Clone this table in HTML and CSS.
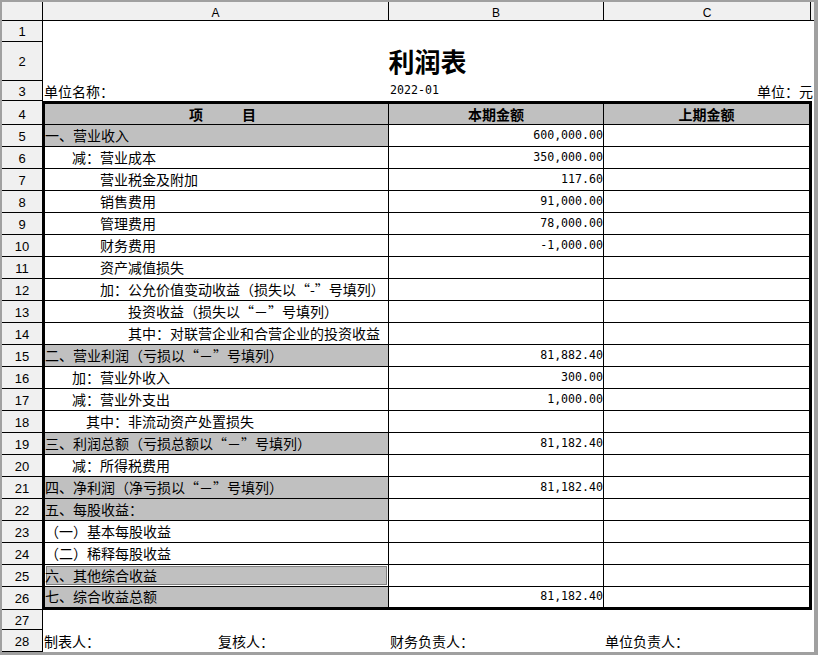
FILE: index.html
```html
<!DOCTYPE html>
<html lang="zh-CN">
<head>
<meta charset="utf-8">
<title>利润表</title>
<link rel="stylesheet" href="styles.css">
</head>
<body>
<div class="sheet">
  <div class="row colhead">
    <div class="rh"></div>
    <div class="ch ch-a">A</div>
    <div class="ch ch-b">B</div>
    <div class="ch ch-c">C</div>
    <div class="ch-tail"></div>
  </div>
  <div class="row r1"><div class="rh">1</div><div class="free"></div></div>
  <div class="row r2"><div class="rh">2</div><div class="free title">利润表</div></div>
  <div class="row r3">
    <div class="rh">3</div>
    <div class="free info">
      <span class="info-a">单位名称：</span>
      <span class="info-b num">2022-01</span>
      <span class="info-c">单位：元</span>
    </div>
  </div>
  <div class="block">
    <div class="rhcol">
      <div class="rh rh4">4</div>
      <div class="rh">5</div><div class="rh">6</div><div class="rh">7</div><div class="rh">8</div>
      <div class="rh">9</div><div class="rh">10</div><div class="rh">11</div><div class="rh">12</div>
      <div class="rh">13</div><div class="rh">14</div><div class="rh">15</div><div class="rh">16</div>
      <div class="rh">17</div><div class="rh">18</div><div class="rh">19</div><div class="rh">20</div>
      <div class="rh">21</div><div class="rh">22</div><div class="rh">23</div><div class="rh">24</div>
      <div class="rh">25</div>
      <div class="rh rh26">26</div>
    </div>
    <div class="table">
      <div class="trow head">
        <div class="cell hcell"><span>项</span><span class="gap"></span><span>目</span></div>
        <div class="cell hcell">本期金额</div>
        <div class="cell hcell">上期金额</div>
      </div>
      <div class="trow">
        <div class="cell item gray">一、营业收入</div>
        <div class="cell num amt">600,000.00</div>
        <div class="cell"></div>
      </div>
      <div class="trow">
        <div class="cell item l1">减：营业成本</div>
        <div class="cell num amt">350,000.00</div>
        <div class="cell"></div>
      </div>
      <div class="trow">
        <div class="cell item l2">营业税金及附加</div>
        <div class="cell num amt">117.60</div>
        <div class="cell"></div>
      </div>
      <div class="trow">
        <div class="cell item l2">销售费用</div>
        <div class="cell num amt">91,000.00</div>
        <div class="cell"></div>
      </div>
      <div class="trow">
        <div class="cell item l2">管理费用</div>
        <div class="cell num amt">78,000.00</div>
        <div class="cell"></div>
      </div>
      <div class="trow">
        <div class="cell item l2">财务费用</div>
        <div class="cell num amt">-1,000.00</div>
        <div class="cell"></div>
      </div>
      <div class="trow">
        <div class="cell item l2">资产减值损失</div>
        <div class="cell num amt"></div>
        <div class="cell"></div>
      </div>
      <div class="trow">
        <div class="cell item l2">加：公允价值变动收益（损失以“-”号填列）</div>
        <div class="cell num amt"></div>
        <div class="cell"></div>
      </div>
      <div class="trow">
        <div class="cell item l3">投资收益（损失以“－”号填列）</div>
        <div class="cell num amt"></div>
        <div class="cell"></div>
      </div>
      <div class="trow">
        <div class="cell item l3">其中：对联营企业和合营企业的投资收益</div>
        <div class="cell num amt"></div>
        <div class="cell"></div>
      </div>
      <div class="trow">
        <div class="cell item gray">二、营业利润（亏损以“－”号填列）</div>
        <div class="cell num amt">81,882.40</div>
        <div class="cell"></div>
      </div>
      <div class="trow">
        <div class="cell item l1">加：营业外收入</div>
        <div class="cell num amt">300.00</div>
        <div class="cell"></div>
      </div>
      <div class="trow">
        <div class="cell item l1">减：营业外支出</div>
        <div class="cell num amt">1,000.00</div>
        <div class="cell"></div>
      </div>
      <div class="trow">
        <div class="cell item l15">其中：非流动资产处置损失</div>
        <div class="cell num amt"></div>
        <div class="cell"></div>
      </div>
      <div class="trow">
        <div class="cell item gray">三、利润总额（亏损总额以“－”号填列）</div>
        <div class="cell num amt">81,182.40</div>
        <div class="cell"></div>
      </div>
      <div class="trow">
        <div class="cell item l1">减：所得税费用</div>
        <div class="cell num amt"></div>
        <div class="cell"></div>
      </div>
      <div class="trow">
        <div class="cell item gray">四、净利润（净亏损以“－”号填列）</div>
        <div class="cell num amt">81,182.40</div>
        <div class="cell"></div>
      </div>
      <div class="trow">
        <div class="cell item gray">五、每股收益：</div>
        <div class="cell num amt"></div>
        <div class="cell"></div>
      </div>
      <div class="trow">
        <div class="cell item">（一）基本每股收益</div>
        <div class="cell num amt"></div>
        <div class="cell"></div>
      </div>
      <div class="trow">
        <div class="cell item">（二）稀释每股收益</div>
        <div class="cell num amt"></div>
        <div class="cell"></div>
      </div>
      <div class="trow">
        <div class="cell item gray selected">六、其他综合收益</div>
        <div class="cell num amt"></div>
        <div class="cell"></div>
      </div>
      <div class="trow last">
        <div class="cell item gray">七、综合收益总额</div>
        <div class="cell num amt">81,182.40</div>
        <div class="cell"></div>
      </div>
    </div>
    <div class="block-tail"></div>
  </div>
  <div class="row r27"><div class="rh">27</div><div class="free"></div></div>
  <div class="row r28">
    <div class="rh">28</div>
    <div class="free sign">
      <span class="sign-a">制表人：</span>
      <span class="sign-b">复核人：</span>
      <span class="sign-c">财务负责人：</span>
      <span class="sign-d">单位负责人：</span>
    </div>
  </div>
</div>
</body>
</html>
```

FILE: styles.css
```css
* { box-sizing: border-box; }

html, body {
  margin: 0;
  padding: 0;
}

body {
  background: #a0a0a0;
  width: 818px;
  height: 655px;
  overflow: hidden;
  font-family: "Noto Sans CJK SC", sans-serif;
  font-size: 14px;
  color: #000;
  padding: 2px 0 0 2px;
}

.sheet {
  width: 812px;
  background: #fff;
}

.row {
  display: flex;
}

.rh {
  width: 41px;
  flex: none;
  background: #f0f0f0;
  border-right: 1px solid #000;
  border-bottom: 1px solid #000;
  display: flex;
  align-items: center;
  justify-content: center;
  font-family: "Liberation Sans", Arial, sans-serif;
  font-size: 13px;
  line-height: 1;
  padding-top: 1px;
}

.free {
  flex: 1;
}

/* column letter header */
.colhead { height: 19px; }
.colhead .rh { border-bottom: 1px solid #000; }
.ch {
  background: #f0f0f0;
  border-right: 1px solid #000;
  border-bottom: 1px solid #000;
  display: flex;
  align-items: flex-end;
  justify-content: center;
  font-family: "Liberation Sans", Arial, sans-serif;
  font-size: 12px;
  line-height: 1;
  padding-bottom: 1px;
}
.ch-a { width: 346px; }
.ch-b { width: 215px; }
.ch-c { width: 207px; }
.ch-tail {
  width: 3px;
  background: #f0f0f0;
  border-bottom: 1px solid #000;
}

.r1 { height: 21px; }
.r2 { height: 39px; }
.r3 { height: 20px; }
.r27 { height: 20px; }
.r28 { height: 22px; }

.title {
  display: flex;
  align-items: center;
  justify-content: center;
  font-size: 26px;
  font-weight: 700;
  line-height: 1;
  padding-bottom: 2px;
  padding-right: 2px;
}

.info {
  display: flex;
  align-items: center;
  line-height: 1;
  padding-bottom: 1px;
}
.info-a { width: 346px; padding-left: 1px; }
.info-b { width: 215px; padding-left: 1px; }
.info-c { flex: 1; text-align: right; padding-right: 1px; }

.num {
  font-family: "DejaVu Sans Mono", "Liberation Mono", monospace;
  font-size: 11.6px;
}

/* data block */
.block {
  display: flex;
  height: 509px;
}
.rhcol {
  width: 40px;
  flex: none;
  display: flex;
  flex-direction: column;
}
.rhcol .rh {
  width: 40px;
  height: 22px;
  border-right: none;
}
.rhcol .rh4 { height: 24px; padding-top: 4px; }
.rhcol .rh26 { height: 23px; }

.table {
  width: 770px;
  border: 3px solid #000;
  display: flex;
  flex-direction: column;
}
.block-tail { width: 2px; }

.trow {
  display: grid;
  grid-template-columns: 344px 215px 205px;
  height: 22px;
  border-bottom: 1px solid #000;
}
.trow.head { height: 21px; }
.trow.last { height: 20px; border-bottom: none; }

.cell {
  border-right: 1px solid #000;
  display: flex;
  align-items: center;
  white-space: nowrap;
  line-height: 1;
  overflow: hidden;
}
.cell:last-child { border-right: none; }

.hcell {
  background: #c0c0c0;
  justify-content: center;
  font-weight: 700;
  font-size: 14px;
  padding-bottom: 1px;
}
.hcell .gap { width: 39px; }
.head .hcell:first-child { padding-left: 12px; }

.gray { background: #c0c0c0; }
.selected {
  box-shadow: inset 0 0 0 1px #ffffff, inset 0 0 0 2px #808080;
}

.item { padding-bottom: 2px; }
.l1 { padding-left: 27px; }
.l15 { padding-left: 41px; }
.l2 { padding-left: 55px; }
.l3 { padding-left: 83px; }

.amt {
  justify-content: flex-end;
  padding-right: 0;
}

.sign {
  display: flex;
  align-items: center;
  line-height: 1;
  padding-bottom: 1px;
}
.sign-a { width: 175px; padding-left: 1px; }
.sign-b { width: 171px; }
.sign-c { width: 215px; padding-left: 1px; }
.sign-d { flex: 1; padding-left: 1px; }
```
